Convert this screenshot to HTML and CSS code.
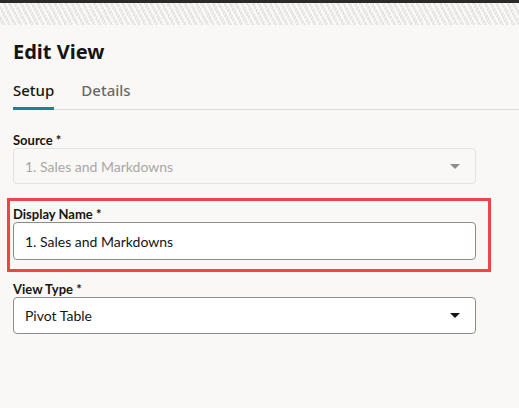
FILE: index.html
```html
<!DOCTYPE html>
<html lang="en">
  <head>
    <meta charset="utf-8" />
    <title>Edit View</title>
    <link rel="stylesheet" href="styles.css">
  </head>
  <body>
    <div class="topbar"></div>
    <div class="grain"></div>
    <div id="panel">
      <h1>Edit View</h1>
      <div class="tabs">
        <span class="tab active">Setup</span>
        <span class="tab">Details</span>
      </div>

      <div class="field source">
        <label>Source *</label>
        <div class="select disabled">
          <span>1. Sales and Markdowns</span>
          <span class="caret"></span>
        </div>
      </div>

      <div class="highlight">
        <div class="field">
          <label>Display Name *</label>
          <div class="input">1. Sales and Markdowns</div>
        </div>
      </div>

      <div class="field">
        <label>View Type *</label>
        <div class="select">
          <span>Pivot Table</span>
          <span class="caret"></span>
        </div>
      </div>
    </div>
  </body>
</html>
```

FILE: styles.css
```css
body {
  margin: 0;
  background: #f9f8f6;
  font-family: "Noto Sans", "Open Sans", sans-serif;
  color: #161513;
}
.topbar {
  height: 3px;
  background: #2b2a28;
}
.grain {
  height: 22px;
  background-color: #e6e4e2;
  background-image:
    repeating-linear-gradient(62deg, rgba(255,255,255,0.75) 0 2px, transparent 2px 5px),
    repeating-linear-gradient(-58deg, rgba(255,255,255,0.5) 0 1px, transparent 1px 3px);
}
#panel {
  padding: 0 43px 0 13px;
}
h1 {
  margin: 14px 0 0;
  font-size: 20px;
  line-height: 26px;
  font-weight: 700;
}
.tabs {
  display: flex;
  gap: 27px;
  margin-top: 15px;
  border-bottom: 1px solid #dedcd9;
  margin-right: -43px;
}
.tab {
  font-size: 15px;
  line-height: 20px;
  padding-bottom: 7px;
  color: #6b6967;
  font-weight: 500;
  border-bottom: 3px solid transparent;
  margin-bottom: -1px;
}
.tab.active {
  color: #161513;
  border-bottom-color: #227e9e;
}
.field label {
  display: block;
  font-family: "Lato", sans-serif;
  font-size: 13px;
  line-height: 15px;
  font-weight: 700;
}
.source {
  margin-top: 23px;
}
.select, .input {
  box-sizing: border-box;
  height: 37px;
  display: flex;
  align-items: center;
  justify-content: space-between;
  padding: 0 12px 0 11px;
  font-family: "Lato", sans-serif;
  font-size: 14px;
  background: #fff;
  border: 1px solid #8f8d8b;
  border-radius: 4px;
}
.input {
  height: 38px;
}
.select.disabled {
  height: 36px;
  background: #f9f8f6;
  border-color: #e4e2df;
  color: #a9a7a4;
}
.caret {
  width: 0;
  height: 0;
  border-left: 5px solid transparent;
  border-right: 5px solid transparent;
  border-top: 5px solid #161513;
  margin-right: 3px;
}
.disabled .caret {
  border-top-color: #8f8d8b;
}
.highlight {
  margin: 14px -15px 0 -6px;
  padding: 6px 12px 9px 3px;
  border: 3px solid #f04447;
}
.highlight + .field {
  margin-top: 10px;
}
```
